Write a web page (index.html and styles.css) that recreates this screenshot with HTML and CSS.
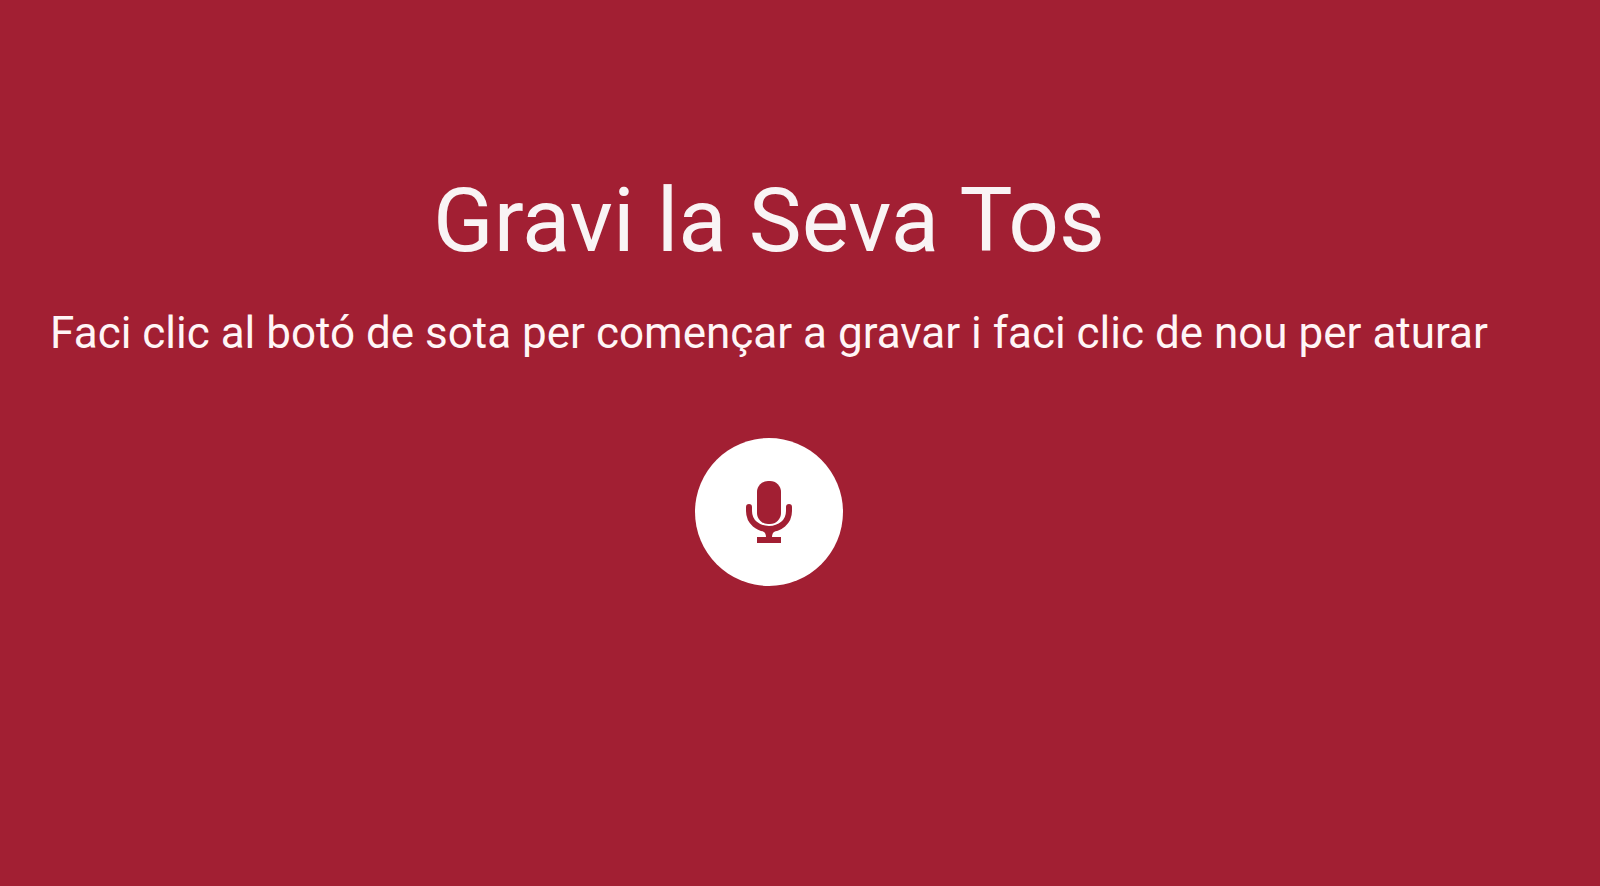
FILE: index.html
```
<!DOCTYPE html>
<html lang="ca">

<head>
    <meta charset="utf-8">
    <title>Gravi la Seva Tos</title>
    <link rel="stylesheet" href="styles.css">
</head>

<body>
    <main class="record">
        <h1>Gravi la Seva Tos</h1>
        <p>Faci clic al botó de sota per començar a gravar i faci clic de nou per aturar</p>
        <button class="mic" type="button" aria-label="Gravar">
            <svg viewBox="0 0 46 62" width="46" height="62">
                <rect x="11" y="0" width="24" height="43" rx="11" fill="currentColor" />
                <path d="M3 26V30C3 41 12 48 23 48S43 41 43 30V26" fill="none" stroke="currentColor" stroke-width="6" stroke-linecap="round" />
                <path d="M17 50H29Q26 52 26 56H35V62H11V56H20Q20 52 17 50Z" fill="currentColor" />
            </svg>
        </button>
    </main>
</body>

</html>
```

FILE: styles.css
```
body {
    margin: 0;
    background-color: #a21f33;
    color: #fff;
    font-family: Roboto, sans-serif;
}

.record {
    padding: 168px 62px 0 0;
    text-align: center;
}

h1 {
    margin: 0;
    color: #f9f4f5;
    font-size: 89px;
    font-weight: 400;
    line-height: 106px;
}

p {
    margin: 29px 0 75px;
    color: #fff5f6;
    font-size: 44px;
    line-height: 60px;
    white-space: nowrap;
}

.mic {
    display: inline-flex;
    align-items: center;
    justify-content: center;
    width: 148px;
    height: 148px;
    padding: 0;
    border: none;
    border-radius: 50%;
    background-color: #fff;
    color: #a21f33;
    cursor: pointer;
}
```
